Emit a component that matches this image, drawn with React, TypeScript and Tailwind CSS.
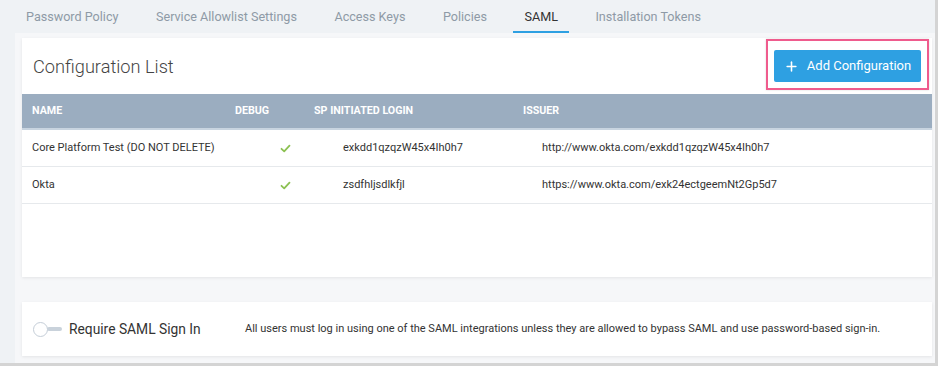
import React from 'react';
import { Plus } from 'lucide-react';

const tabs = ['Password Policy', 'Service Allowlist Settings', 'Access Keys', 'Policies', 'SAML', 'Installation Tokens'];

const rows = [
  { name: 'Core Platform Test (DO NOT DELETE)', sp: 'exkdd1qzqzW45x4Ih0h7', issuer: 'http://www.okta.com/exkdd1qzqzW45x4Ih0h7' },
  { name: 'Okta', sp: 'zsdfhljsdlkfjl', issuer: 'https://www.okta.com/exk24ectgeemNt2Gp5d7' },
];

function Check() {
  return (
    <svg width="11" height="9" viewBox="0 0 11 9" fill="none">
      <path d="M1.5 4.8 L4.2 7.3 L9.5 1.7" stroke="#8cc152" strokeWidth="1.8" strokeLinecap="round" strokeLinejoin="round" />
    </svg>
  );
}

export default function App() {
  return (
    <div className="w-[938px] h-[366px] overflow-hidden bg-[#eff2f5] border-r-[3px] border-b-[3px] border-[#d4d4d4] font-['Roboto',sans-serif]">
      {/* tabs */}
      <div className="flex h-[33px] pl-[15px] gap-[15.5px]">
        {tabs.map((t) => (
          <div
            key={t}
            className={
              t === 'SAML'
                ? 'flex items-center h-[33px] pt-[3px] px-[11px] border-b-2 border-[#2ea0e2] text-[12.6px] text-[#333]'
                : 'flex items-center h-[33px] pt-[3px] px-[11px] border-b-2 border-transparent text-[12.6px] text-[#8e9aa6]'
            }
          >
            {t}
          </div>
        ))}
      </div>

      <div className="ml-[15px] h-full bg-[#f6f7f9] pt-[5px] pl-[7px]">
        {/* configuration list */}
        <div className="w-[910px] h-[239px] bg-white shadow-[0_1px_3px_rgba(0,0,0,0.08)]">
          <div className="h-[56px] flex items-center justify-between px-[11px]">
            <h1 className="pt-[1px] text-[18.2px] font-light text-[#444]">Configuration List</h1>
            <div className="relative">
              <button className="h-[32px] w-[147px] flex items-center justify-center gap-[8px] bg-[#2ea0e2] text-white text-[13px] rounded-[2px]">
                <Plus className="w-[15px] h-[15px]" strokeWidth={2.5} />
                Add Configuration
              </button>
              <div className="absolute -left-[8px] -right-[8px] -top-[11px] -bottom-[8px] border-2 border-[#ef5b8d] shadow-[0_0_2px_rgba(0,0,0,0.15)]" />
            </div>
          </div>

          <div className="grid grid-cols-[203px_79px_209px_1fr] h-[36px] items-center bg-[#9badc0] border-b-2 border-[#c8d4e0] text-[10.7px] font-bold text-white">
            <div className="pl-[10px]">NAME</div>
            <div className="pl-[10px]">DEBUG</div>
            <div className="pl-[10px]">SP INITIATED LOGIN</div>
            <div className="pl-[10px]">ISSUER</div>
          </div>
          {rows.map((r) => (
            <div key={r.name} className="grid grid-cols-[203px_79px_209px_1fr] h-[37px] items-center border-b border-[#e6e9ec] text-[11px] text-[#333]">
              <div className="pl-[10px] whitespace-nowrap">{r.name}</div>
              <div className="pl-[55px] flex"><Check /></div>
              <div className="pl-[39px]">{r.sp}</div>
              <div className="pl-[29px]">{r.issuer}</div>
            </div>
          ))}
        </div>

        {/* require saml */}
        <div className="mt-[25px] w-[910px] h-[54px] bg-white shadow-[0_1px_3px_rgba(0,0,0,0.08)] flex items-center pl-[11px]">
          <div className="relative w-[29px] h-[15px]">
            <div className="absolute left-[14px] top-[5.5px] w-[15px] h-[4px] rounded-full bg-[#c9d2db]" />
            <div className="absolute left-0 top-0 w-[15px] h-[15px] rounded-full bg-white border border-[#c5ced8]" />
          </div>
          <div className="ml-[7px] w-[176px] text-[13.8px] text-[#333]">Require SAML Sign In</div>
          <p className="text-[11px] text-[#333]">
            All users must log in using one of the SAML integrations unless they are allowed to bypass SAML and use password-based sign-in.
          </p>
        </div>
      </div>
    </div>
  );
}
